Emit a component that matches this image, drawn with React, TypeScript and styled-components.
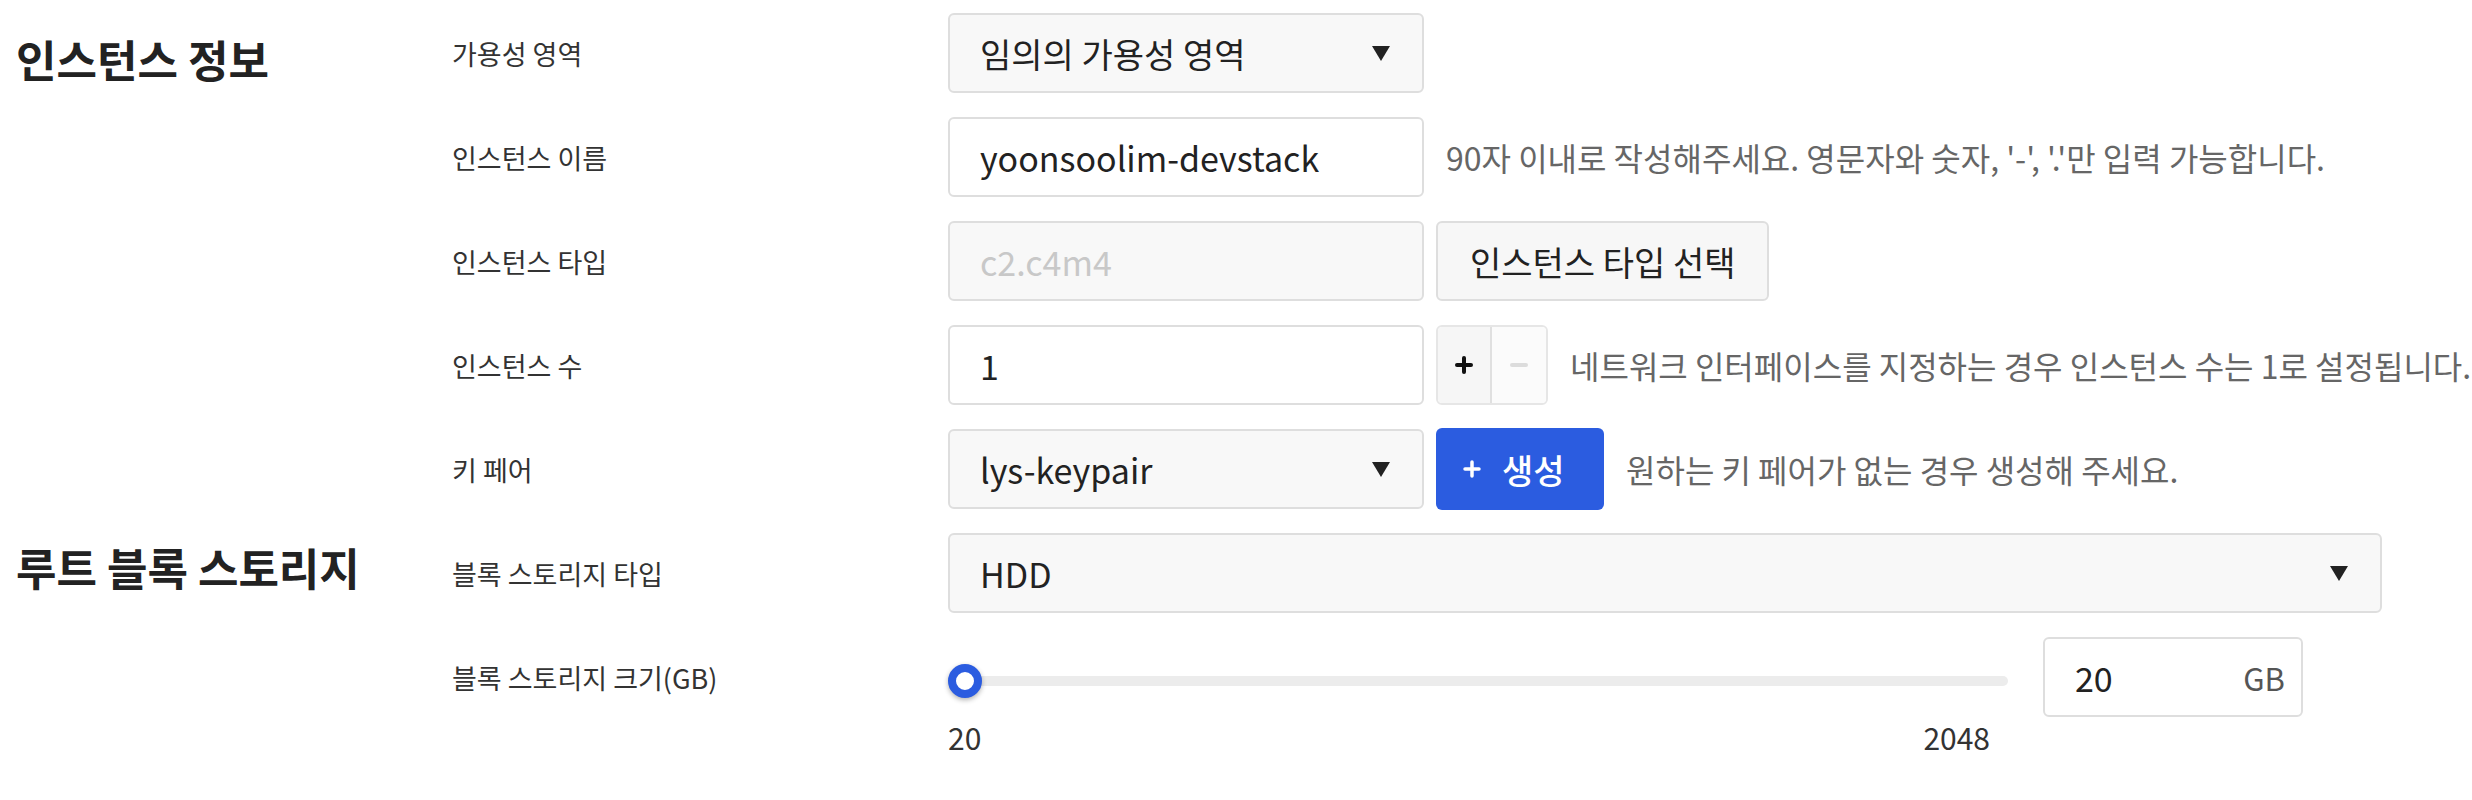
import React from "react";
import styled, { createGlobalStyle } from "styled-components";
import { Plus, Minus } from "lucide-react";

const GlobalStyle = createGlobalStyle`
  body {
    margin: 0;
    background: #fff;
    font-family: "Noto Sans CJK KR", "Noto Sans", sans-serif;
    color: #333;
  }
`;

const Page = styled.div`
  display: flex;
  flex-direction: column;
  gap: 24px;
  padding: 13px 0 0 16px;
`;

const Section = styled.section`
  display: flex;
`;

const SectionTitle = styled.h2<{ $offset: number }>`
  width: 436px;
  margin: 0;
  padding-top: ${({ $offset }) => $offset}px;
  font-size: 44px;
  font-weight: 700;
  line-height: 52px;
  color: #222;
  white-space: nowrap;
`;

const Fields = styled.div`
  display: flex;
  flex-direction: column;
  gap: 24px;
`;

const Row = styled.div`
  display: flex;
  align-items: flex-start;
`;

const Label = styled.div`
  width: 496px;
  height: 80px;
  display: flex;
  align-items: center;
  font-size: 27px;
  color: #333;
`;

const Controls = styled.div`
  display: flex;
  align-items: center;
  gap: 12px;
  height: 80px;
`;

const Box = styled.div<{ $width: number; $tone?: "white" | "grey" }>`
  box-sizing: border-box;
  width: ${({ $width }) => $width}px;
  height: 80px;
  display: flex;
  align-items: center;
  justify-content: space-between;
  padding: 0 32px 0 30px;
  border: 2px solid #dedede;
  border-radius: 6px;
  background: ${({ $tone }) => ($tone === "grey" ? "#f8f8f8" : "#fff")};
  font-size: 34px;
  color: #222;
`;

const Muted = styled.span`
  color: #c8c8c8;
`;

const Arrow = styled.span`
  width: 0;
  height: 0;
  border-left: 9px solid transparent;
  border-right: 9px solid transparent;
  border-top: 15px solid #222;
`;

const Hint = styled.span`
  margin-left: 10px;
  font-size: 32px;
  color: #666;
  white-space: nowrap;
`;

const GhostButton = styled.button`
  box-sizing: border-box;
  height: 80px;
  padding: 0 32px;
  border: 2px solid #dedede;
  border-radius: 6px;
  background: #f7f7f7;
  font-family: inherit;
  font-size: 34px;
  color: #222;
`;

const Stepper = styled.div`
  display: flex;
  height: 80px;
  box-sizing: border-box;
  border: 2px solid #e6e6e6;
  border-radius: 6px;
  overflow: hidden;
`;

const StepButton = styled.button<{ $disabled?: boolean }>`
  width: 54px;
  display: flex;
  align-items: center;
  justify-content: center;
  padding: 0;
  border: none;
  border-right: ${({ $disabled }) => ($disabled ? "none" : "2px solid #e0e0e0")};
  background: ${({ $disabled }) => ($disabled ? "#fbfbfb" : "#f6f6f6")};
  color: ${({ $disabled }) => ($disabled ? "#dcdcdc" : "#111")};
`;

const PrimaryButton = styled.button`
  box-sizing: border-box;
  width: 168px;
  height: 82px;
  display: flex;
  align-items: center;
  gap: 18px;
  padding: 0 0 0 24px;
  border: none;
  border-radius: 6px;
  background: #2b5ce0;
  color: #fff;
  font-family: inherit;
  font-size: 34px;
  font-weight: 500;
`;

const SliderColumn = styled.div`
  width: 1060px;
  display: flex;
  flex-direction: column;
`;

const TrackArea = styled.div`
  position: relative;
  height: 80px;
  display: flex;
  align-items: center;
`;

const Track = styled.div`
  flex: 1;
  height: 10px;
  margin-top: 8px;
  border-radius: 5px;
  background: #ececec;
`;

const Thumb = styled.span`
  position: absolute;
  left: 0;
  top: 27px;
  box-sizing: border-box;
  width: 34px;
  height: 34px;
  border-radius: 50%;
  border: 8px solid #2b5ce0;
  background: #fff;
  box-shadow: 0 2px 5px rgba(0, 0, 0, 0.3);
`;

const Scale = styled.div`
  display: flex;
  justify-content: space-between;
  padding-right: 18px;
  font-size: 30px;
  line-height: 40px;
  color: #333;
`;

const SizeBox = styled(Box)`
  margin-left: 35px;
  padding: 0 16px 0 30px;
`;

const Unit = styled.span`
  color: #555;
  font-size: 31px;
`;

export default function App() {
  return (
    <>
      <GlobalStyle />
      <Page>
        <Section>
          <SectionTitle $offset={20}>인스턴스 정보</SectionTitle>
          <Fields>
            <Row>
              <Label>가용성 영역</Label>
              <Controls>
                <Box $width={476} $tone="grey">
                  임의의 가용성 영역
                  <Arrow />
                </Box>
              </Controls>
            </Row>
            <Row>
              <Label>인스턴스 이름</Label>
              <Controls>
                <Box $width={476}>yoonsoolim-devstack</Box>
                <Hint>90자 이내로 작성해주세요. 영문자와 숫자, '-', '.'만 입력 가능합니다.</Hint>
              </Controls>
            </Row>
            <Row>
              <Label>인스턴스 타입</Label>
              <Controls>
                <Box $width={476} $tone="grey">
                  <Muted>c2.c4m4</Muted>
                </Box>
                <GhostButton>인스턴스 타입 선택</GhostButton>
              </Controls>
            </Row>
            <Row>
              <Label>인스턴스 수</Label>
              <Controls>
                <Box $width={476}>1</Box>
                <Stepper>
                  <StepButton>
                    <Plus size={24} strokeWidth={4} />
                  </StepButton>
                  <StepButton $disabled>
                    <Minus size={24} strokeWidth={4} />
                  </StepButton>
                </Stepper>
                <Hint>네트워크 인터페이스를 지정하는 경우 인스턴스 수는 1로 설정됩니다.</Hint>
              </Controls>
            </Row>
            <Row>
              <Label>키 페어</Label>
              <Controls>
                <Box $width={476} $tone="grey">
                  lys-keypair
                  <Arrow />
                </Box>
                <PrimaryButton>
                  <Plus size={24} strokeWidth={3.5} />
                  생성
                </PrimaryButton>
                <Hint>원하는 키 페어가 없는 경우 생성해 주세요.</Hint>
              </Controls>
            </Row>
          </Fields>
        </Section>
        <Section>
          <SectionTitle $offset={8}>루트 블록 스토리지</SectionTitle>
          <Fields>
            <Row>
              <Label>블록 스토리지 타입</Label>
              <Controls>
                <Box $width={1434} $tone="grey">
                  HDD
                  <Arrow />
                </Box>
              </Controls>
            </Row>
            <Row>
              <Label>블록 스토리지 크기(GB)</Label>
              <SliderColumn>
                <TrackArea>
                  <Track />
                  <Thumb />
                </TrackArea>
                <Scale>
                  <span>20</span>
                  <span>2048</span>
                </Scale>
              </SliderColumn>
              <SizeBox $width={260}>
                20
                <Unit>GB</Unit>
              </SizeBox>
            </Row>
          </Fields>
        </Section>
      </Page>
    </>
  );
}
